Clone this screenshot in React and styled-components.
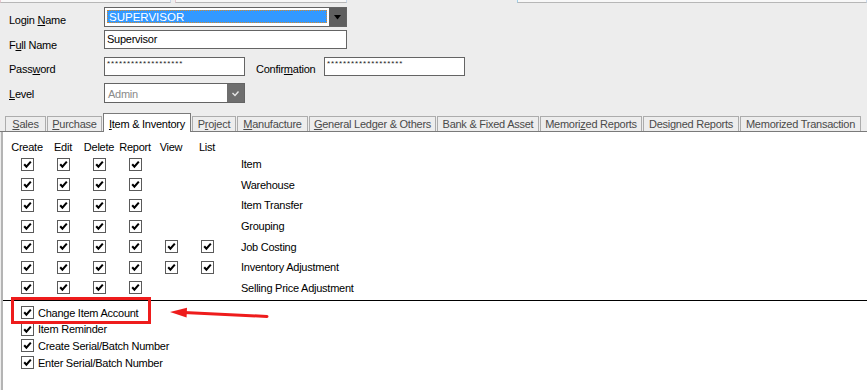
import React from "react";
import styled, { createGlobalStyle } from "styled-components";

const GlobalStyle = createGlobalStyle`
  html, body {
    margin: 0;
    padding: 0;
    background: #ededed;
  }
  body {
    font-family: "Liberation Sans", Arial, sans-serif;
    font-size: 11px;
    letter-spacing: -0.25px;
    color: #000;
  }
`;

const tabs = [
  { label: "Sales", key: "S", width: 41 },
  { label: "Purchase", key: "P", width: 55 },
  { label: "Item & Inventory", key: "I", width: 88, active: true },
  { label: "Project", key: "r", width: 44 },
  { label: "Manufacture", key: "M", width: 71 },
  { label: "General Ledger & Others", key: "G", width: 127 },
  { label: "Bank & Fixed Asset", width: 102 },
  { label: "Memorized Reports", key: "z", width: 102 },
  { label: "Designed Reports", width: 96 },
  { label: "Memorized Transaction", width: 121 },
];

const columns = ["Create", "Edit", "Delete", "Report", "View", "List"];

const rows = [
  { label: "Item", checks: 4 },
  { label: "Warehouse", checks: 4 },
  { label: "Item Transfer", checks: 4 },
  { label: "Grouping", checks: 4 },
  { label: "Job Costing", checks: 6 },
  { label: "Inventory Adjustment", checks: 6 },
  { label: "Selling Price Adjustment", checks: 4 },
];

const options = [
  "Change Item Account",
  "Item Reminder",
  "Create Serial/Batch Number",
  "Enter Serial/Batch Number",
];

// underline the mnemonic letter like a Windows label
function Mnemonic({ text, letter }) {
  if (!letter) return text;
  const i = text.indexOf(letter);
  if (i < 0) return text;
  return (
    <>
      {text.slice(0, i)}
      <u>{text[i]}</u>
      {text.slice(i + 1)}
    </>
  );
}

function CheckBox() {
  return (
    <Box>
      <svg width="11" height="11" viewBox="0 0 11 11">
        <path d="M2.2 5.2 L4.4 7.6 L8.8 2.6" fill="none" stroke="#000" strokeWidth="2.1" />
      </svg>
    </Box>
  );
}

function App() {
  return (
    <Window>
      <GlobalStyle />
      <TopStrip>
        <StripPanel $width={170} />
        <StripGap $width={4} />
        <StripPanel $width={171} />
        <StripGap $width={172} />
        <StripPanel $width={350} $accent />
      </TopStrip>

      <Form>
        <FieldRow $top={4} $height={20}>
          <Label $dy={6}>
            <Mnemonic text="Login Name" letter="N" />
          </Label>
          <Combo $width={243}>
            <Selection>SUPERVISOR</Selection>
            <DropButton>
              <svg width="9" height="5" viewBox="0 0 9 5">
                <path d="M1 0 H8 L4.5 4.5 Z" fill="#000" />
              </svg>
            </DropButton>
          </Combo>
        </FieldRow>

        <FieldRow $top={3} $height={19}>
          <Label $dy={8}>
            <Mnemonic text="Full Name" letter="u" />
          </Label>
          <TextBox $width={243}>Supervisor</TextBox>
        </FieldRow>

        <FieldRow $top={8} $height={19}>
          <Label $dy={5}>
            <Mnemonic text="Password" letter="w" />
          </Label>
          <TextBox $width={141}>
            <Masked>*******************</Masked>
          </TextBox>
          <SideLabel $dy={5}>
            <Mnemonic text="Confirmation" letter="m" />
          </SideLabel>
          <TextBox $width={141}>
            <Masked>*******************</Masked>
          </TextBox>
        </FieldRow>

        <FieldRow $top={7} $height={20}>
          <Label $dy={4}>
            <Mnemonic text="Level" letter="L" />
          </Label>
          <Combo $width={141}>
            <DisabledText>Admin</DisabledText>
            <DropButton $light>
              <svg width="9" height="7" viewBox="0 0 9 7">
                <path d="M1.5 3 L4 5.5 L7.5 1.5" fill="none" stroke="#e6e6e6" strokeWidth="1.4" />
              </svg>
            </DropButton>
          </Combo>
        </FieldRow>
      </Form>

      <TabStrip>
        {tabs.map((t) => (
          <Tab key={t.label} $width={t.width} $active={t.active}>
            <Mnemonic text={t.label} letter={t.key} />
          </Tab>
        ))}
        <TabFiller />
      </TabStrip>

      <Page>
        <PermGrid>
          {columns.map((c) => (
            <HeadCell key={c}>{c}</HeadCell>
          ))}
          <HeadCell />
          {rows.map((r) => (
            <React.Fragment key={r.label}>
              {columns.map((c, i) => (
                <Cell key={c}>{i < r.checks && <CheckBox />}</Cell>
              ))}
              <RowLabel>{r.label}</RowLabel>
            </React.Fragment>
          ))}
        </PermGrid>

        <Divider />

        <OptionList>
          {options.map((o) => (
            <Option key={o}>
              <CheckBox />
              <span>{o}</span>
            </Option>
          ))}
        </OptionList>

        <Highlight />
        <Arrow width="110" height="20" viewBox="0 0 110 20">
          <path d="M19 9.6 L102 13.4" stroke="#ee1c1c" strokeWidth="3" strokeLinecap="round" />
          <path d="M5 9 L22 4.8 L21.6 14.6 Z" fill="#ee1c1c" />
        </Arrow>
      </Page>
    </Window>
  );
}

export default App;

const Window = styled.div`
  width: 867px;
  height: 390px;
  overflow: hidden;
  display: flex;
  flex-direction: column;
`;

const TopStrip = styled.div`
  display: flex;
  height: 3px;
`;

const StripPanel = styled.div`
  width: ${(p) => p.$width}px;
  height: 2px;
  background: #f8f8f8;
  border-bottom: 1px solid #b7b7b7;
  border-left: 1px solid ${(p) => (p.$accent ? "#9fd0ea" : "#e8c8d0")};
  border-right: 1px solid #c9d8ea;
`;

const StripGap = styled.div`
  width: ${(p) => p.$width}px;
`;

const Form = styled.div`
  display: flex;
  flex-direction: column;
  padding-left: 9px;
`;

const FieldRow = styled.div`
  display: flex;
  align-items: flex-start;
  margin-top: ${(p) => p.$top}px;
  height: ${(p) => p.$height}px;
`;

const Label = styled.div`
  width: 95px;
  padding-top: ${(p) => p.$dy}px;
  line-height: 14px;
`;

const SideLabel = styled(Label)`
  width: 68px;
  margin-left: 11px;
`;

const TextBox = styled.div`
  box-sizing: border-box;
  width: ${(p) => p.$width}px;
  height: 100%;
  border: 1px solid #646464;
  background: #fff;
  padding: 0 2px;
  line-height: 17px;
  overflow: hidden;
  white-space: nowrap;
`;

const Masked = styled.span`
  display: block;
  font-size: 8px;
  letter-spacing: 0.9px;
  line-height: 11px;
  color: #222;
`;

const Combo = styled.div`
  box-sizing: border-box;
  width: ${(p) => p.$width}px;
  height: 100%;
  border: 1px solid #646464;
  background: #fff;
  display: flex;
  align-items: stretch;
  padding: 2px 0 0 2px;
`;

const Selection = styled.div`
  flex: 1;
  margin: 0 2px 3px 0;
  background: #3399ff;
  color: #fff;
  border: 1px dotted #d98a2a;
  line-height: 12px;
  padding-left: 1px;
  font-size: 11.5px;
  letter-spacing: 0;
`;

const DisabledText = styled.div`
  flex: 1;
  color: #8a8a8a;
  line-height: 16px;
  padding-left: 1px;
`;

const DropButton = styled.div`
  width: 17px;
  margin-top: -2px;
  background: ${(p) => (p.$light ? "#6e6e6e" : "#5f5f5f")};
  display: flex;
  align-items: center;
  justify-content: center;
`;

const TabStrip = styled.div`
  display: flex;
  align-items: flex-end;
  gap: 1px;
  margin-top: 10px;
  height: 18px;
  padding-left: 5px;
  border-bottom: 1px solid #7a7a7a;
`;

const Tab = styled.div`
  box-sizing: border-box;
  width: ${(p) => p.$width}px;
  height: ${(p) => (p.$active ? 19 : 15)}px;
  margin-bottom: ${(p) => (p.$active ? -1 : 0)}px;
  border: 1px solid ${(p) => (p.$active ? "#7a7a7a" : "#acacac")};
  border-bottom: none;
  background: ${(p) => (p.$active ? "#fff" : "#ededed")};
  color: ${(p) => (p.$active ? "#000" : "#4a4a4a")};
  display: flex;
  align-items: center;
  justify-content: center;
  padding-top: ${(p) => (p.$active ? 2 : 0)}px;
  white-space: nowrap;
`;

const TabFiller = styled.div`
  flex: 1;
`;

const Page = styled.div`
  position: relative;
  flex: 1;
  margin-left: 1px;
  border-left: 2px solid #b4b4b4;
  background: #fff;
  padding-top: 8px;
`;

const PermGrid = styled.div`
  display: grid;
  grid-template-columns: repeat(6, 36px) 1fr;
  grid-template-rows: 14px;
  grid-auto-rows: 20.6px;
  padding-left: 6px;
`;

const HeadCell = styled.div`
  text-align: center;
  line-height: 14px;
`;

const Cell = styled.div`
  display: flex;
  align-items: center;
  justify-content: center;
`;

const RowLabel = styled.div`
  display: flex;
  align-items: center;
  padding-left: 16px;
`;

const Box = styled.div`
  box-sizing: border-box;
  width: 13px;
  height: 13px;
  border: 1px solid #5a5a5a;
  background: #fff;
  display: flex;
  align-items: center;
  justify-content: center;
  flex-shrink: 0;
`;

const Divider = styled.div`
  height: 1px;
  margin-top: 2px;
  background: #000;
`;

const OptionList = styled.div`
  display: grid;
  grid-auto-rows: 16.7px;
  padding: 3px 0 0 18px;
`;

const Option = styled.div`
  display: flex;
  align-items: center;
  gap: 4px;
`;

const Highlight = styled.div`
  position: absolute;
  left: 8px;
  top: 165px;
  width: 140px;
  height: 27px;
  box-sizing: border-box;
  border: 3px solid #ee1c1c;
  pointer-events: none;
`;

const Arrow = styled.svg`
  position: absolute;
  left: 162px;
  top: 171px;
`;
